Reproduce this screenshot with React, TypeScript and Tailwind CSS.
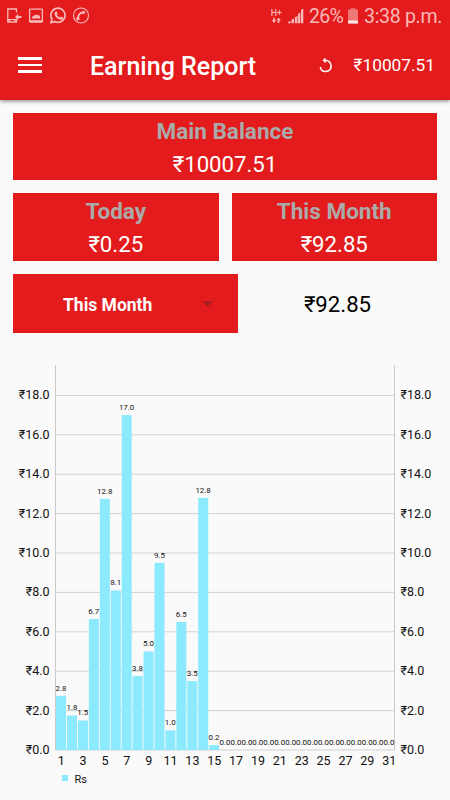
import React, { FC } from "react";

interface BalanceCardProps {
  title: string;
  amount: string;
  className?: string;
}

const earnings = [
  2.75, 1.75, 1.5, 6.65, 12.75, 8.1, 17, 3.75, 5, 9.5, 1, 6.5, 3.5, 12.8, 0.25,
  0, 0, 0, 0, 0, 0, 0, 0, 0, 0, 0, 0, 0, 0, 0, 0,
];
const labels = [
  "2.8", "1.8", "1.5", "6.7", "12.8", "8.1", "17.0", "3.8", "5.0", "9.5",
  "1.0", "6.5", "3.5", "12.8", "0.2",
];
const ticks = [0, 2, 4, 6, 8, 10, 12, 14, 16, 18];

const chart = { left: 55.5, right: 394.5, top: 25, bottom: 410 };
const slot = (chart.right - chart.left) / earnings.length;
const toY = (value: number) => chart.bottom - value * 19.7;

const StatusBar: FC = () => (
  <div className="flex h-8 items-center justify-between pl-[6px] pr-[8px] text-[#f7b9b9]">
    <div className="flex items-center">
      <svg width="86" height="18" viewBox="6 6.500 86 18" fill="none" stroke="currentColor">
        <path d="M16.500 12V8.500h-8.700v13h8.700V18.500" strokeWidth="1.300" />
        <path d="M7.500 20.300h3M14 20.300h3M7.500 19h9.500" strokeWidth="1.200" />
        <path d="M15 16.500l3.300-3.200v2.200h3.200v2h-3.200v2.200z" fill="currentColor" stroke="none" />
        <rect x="29.600" y="8.600" width="12.800" height="13" rx="0.800" strokeWidth="1.300" />
        <path d="M29.500 20.700h13" strokeWidth="2" />
        <path d="M32 18v-1.500l2-1.500 1.500-1 1.500.8 1-.8 2 2V18z" fill="currentColor" stroke="none" />
        <path d="M51 22.100l.9-3.600a7.100 7.100 0 1 1 2.800 2.600z" strokeWidth="1.700" />
        <path
          d="M55.600 11.200c.5-.4 1.100-.3 1.300.1l.7 1.700c.1.500-.8 1-.7 1.400.7 1.200 1.700 2 2.900 2.500.5.100.9-1 1.400-.9l1.700.9c.5.800-.4 2.100-1.500 2.300-3 .6-7.400-3.700-6.800-6.700.2-.6.500-1 1-1.300z"
          fill="currentColor"
          stroke="none"
        />
        <circle cx="81" cy="15" r="7.500" strokeWidth="1.100" />
        <path d="M78 18.300c-.1-2.900 1.700-5.700 4.400-6.500" strokeWidth="1.900" />
        <path
          d="M81.600 10.900l2.800-.6 1 2.100-2.700 1.600zM76.200 17l2.800-.5.900 2-1.900 1.800-1.500-.9z"
          fill="currentColor"
          stroke="none"
        />
      </svg>
    </div>
    <div className="flex items-center">
      <svg width="34" height="20" viewBox="270 5.500 34 20" fill="currentColor">
        <text x="270.800" y="15.200" fontSize="9.500" fontWeight="500" textLength="11.200" lengthAdjust="spacingAndGlyphs">H+</text>
        <path d="M273.200 17.200h1.600v2.600h1.500l-2.300 2.600-2.300-2.600h1.500zM277.800 22.400v-2.600h-1.500l2.300-2.600 2.300 2.600h-1.500v2.600z" />
        <path d="M288 22.800v-1.300l2.500-1.200v2.500zM291.500 22.800v-3.600l2.500-1.200v4.800zM294.900 22.800v-6l2.500-1.200v7.200zM298 22.800v-9.500l2.300-1v10.500zM301 22.800V9.300l2.300-1v14.500z" />
      </svg>
      <span className="ml-[5px] mt-[2px] w-[35px] whitespace-nowrap text-[19.500px] tracking-[-0.700px]">26%</span>
      <svg className="ml-[4px]" width="10" height="16" viewBox="0 0 10 16">
        <path d="M2.500 1.500V.3h5v1.200H10V15.500H0v-14z" fill="#f07777" />
        <path d="M0 12.500h10v3H0z" fill="#ffe6e6" />
      </svg>
      <span className="ml-[6px] mt-[2px] w-[78px] whitespace-nowrap text-[19.500px] tracking-[-0.300px]">3:38 p.m.</span>
    </div>
  </div>
);

const Header: FC = () => (
  <header className="h-[100px] bg-[#e31b1c] shadow-[0_1px_4px_rgba(0,0,0,0.5)]">
    <StatusBar />
    <div className="flex h-[68px] items-center pl-[18px] pr-[15px] text-white">
      <div className="-mt-[2px] flex w-6 flex-col gap-[4px]">
        <span className="h-[2.500px] bg-white" />
        <span className="h-[2.500px] bg-white" />
        <span className="h-[2.500px] bg-white" />
      </div>
      <h1 className="ml-[48px] mt-px whitespace-nowrap text-[25px] font-medium">Earning Report</h1>
      <svg className="ml-auto" width="14" height="16" viewBox="0 0 14 16" fill="none" stroke="white" strokeWidth="1.600">
        <path d="M5 2.400C8.900 1.600 12.300 4.600 12.100 8.300 11.700 15 2.200 15.300 1.400 9" />
        <path d="M6.300.3L4.600 2.500l2.200 2" strokeWidth="1.300" />
      </svg>
      <span className="ml-[21px] whitespace-nowrap text-[17.300px]">₹10007.51</span>
    </div>
  </header>
);

const BalanceCard: FC<BalanceCardProps> = ({ title, amount, className = "h-[68px]" }) => (
  <div className={`flex flex-1 flex-col items-center bg-[#e31b1c] pt-[2px] ${className}`}>
    <div className="text-[22.500px] leading-[33px] font-bold text-[#aaaaaa]">{title}</div>
    <div className="text-[22.200px] leading-[32px] text-white">{amount}</div>
  </div>
);

const EarningChart: FC = () => (
  <svg width="450" height="460" viewBox="0 0 450 460" fill="#111">
    {ticks.map((tick) => (
      <g key={tick} fontSize="12.500">
        <path d={`M${chart.left} ${toY(tick)}H${chart.right}`} stroke="#d2d2d2" />
        <text x="49.500" y={toY(tick) + 4} textAnchor="end">₹{tick.toFixed(1)}</text>
        <text x="400.500" y={toY(tick) + 4}>₹{tick.toFixed(1)}</text>
      </g>
    ))}
    <path
      d={`M${chart.left} ${chart.top}V${chart.bottom}M${chart.right} ${chart.top}V${chart.bottom}`}
      stroke="#cacaca"
    />
    {earnings.map((value, idx) => (
      <g key={`day-${idx}`}>
        <rect
          x={chart.left + idx * slot + 0.55}
          y={toY(value)}
          width={slot - 0.9}
          height={value * 19.7}
          fill="#8ceaff"
        />
        <text
          x={chart.left + (idx + 0.5) * slot}
          y={toY(value) - 5.3}
          fontSize="7.900"
          textAnchor="middle"
        >
          {labels[idx] ?? "0.0"}
        </text>
        {idx % 2 === 0 && (
          <text x={chart.left + (idx + 0.5) * slot + 0.2} y="425" fontSize="12.500" textAnchor="middle">
            {idx + 1}
          </text>
        )}
      </g>
    ))}
    <rect x="62" y="435" width="6" height="6" fill="#8ceaff" />
    <text x="74.500" y="442.500" fontSize="11">Rs</text>
  </svg>
);

const App: FC = () => {
  return (
    <div className="h-[800px] w-[450px] overflow-hidden bg-[#fafafa] font-['Roboto','Noto_Sans',sans-serif]">
      <Header />
      <main>
        <div className="flex flex-col gap-[13px] px-[13px] pt-[13px]">
          <div className="flex">
            <BalanceCard title="Main Balance" amount="₹10007.51" className="h-[67px]" />
          </div>
          <div className="flex gap-[13px]">
            <BalanceCard title="Today" amount="₹0.25" />
            <BalanceCard title="This Month" amount="₹92.85" />
          </div>
          <div className="flex h-[59px] items-center">
            <button className="flex h-full w-[225px] items-center bg-[#e31b1c] pl-[50px] pr-[25px] text-white">
              <span className="mt-[3px] text-[17.500px] font-bold">This Month</span>
              <svg className="ml-auto" width="11" height="6" viewBox="0 0 11 6">
                <path d="M0 0h11L5.500 6z" fill="#aa2022" />
              </svg>
            </button>
            <div className="mt-[3px] flex-1 text-center text-[22.200px] text-black">₹92.85</div>
          </div>
        </div>
        <div className="mt-[7px]">
          <EarningChart />
        </div>
      </main>
    </div>
  );
};

export default App;
